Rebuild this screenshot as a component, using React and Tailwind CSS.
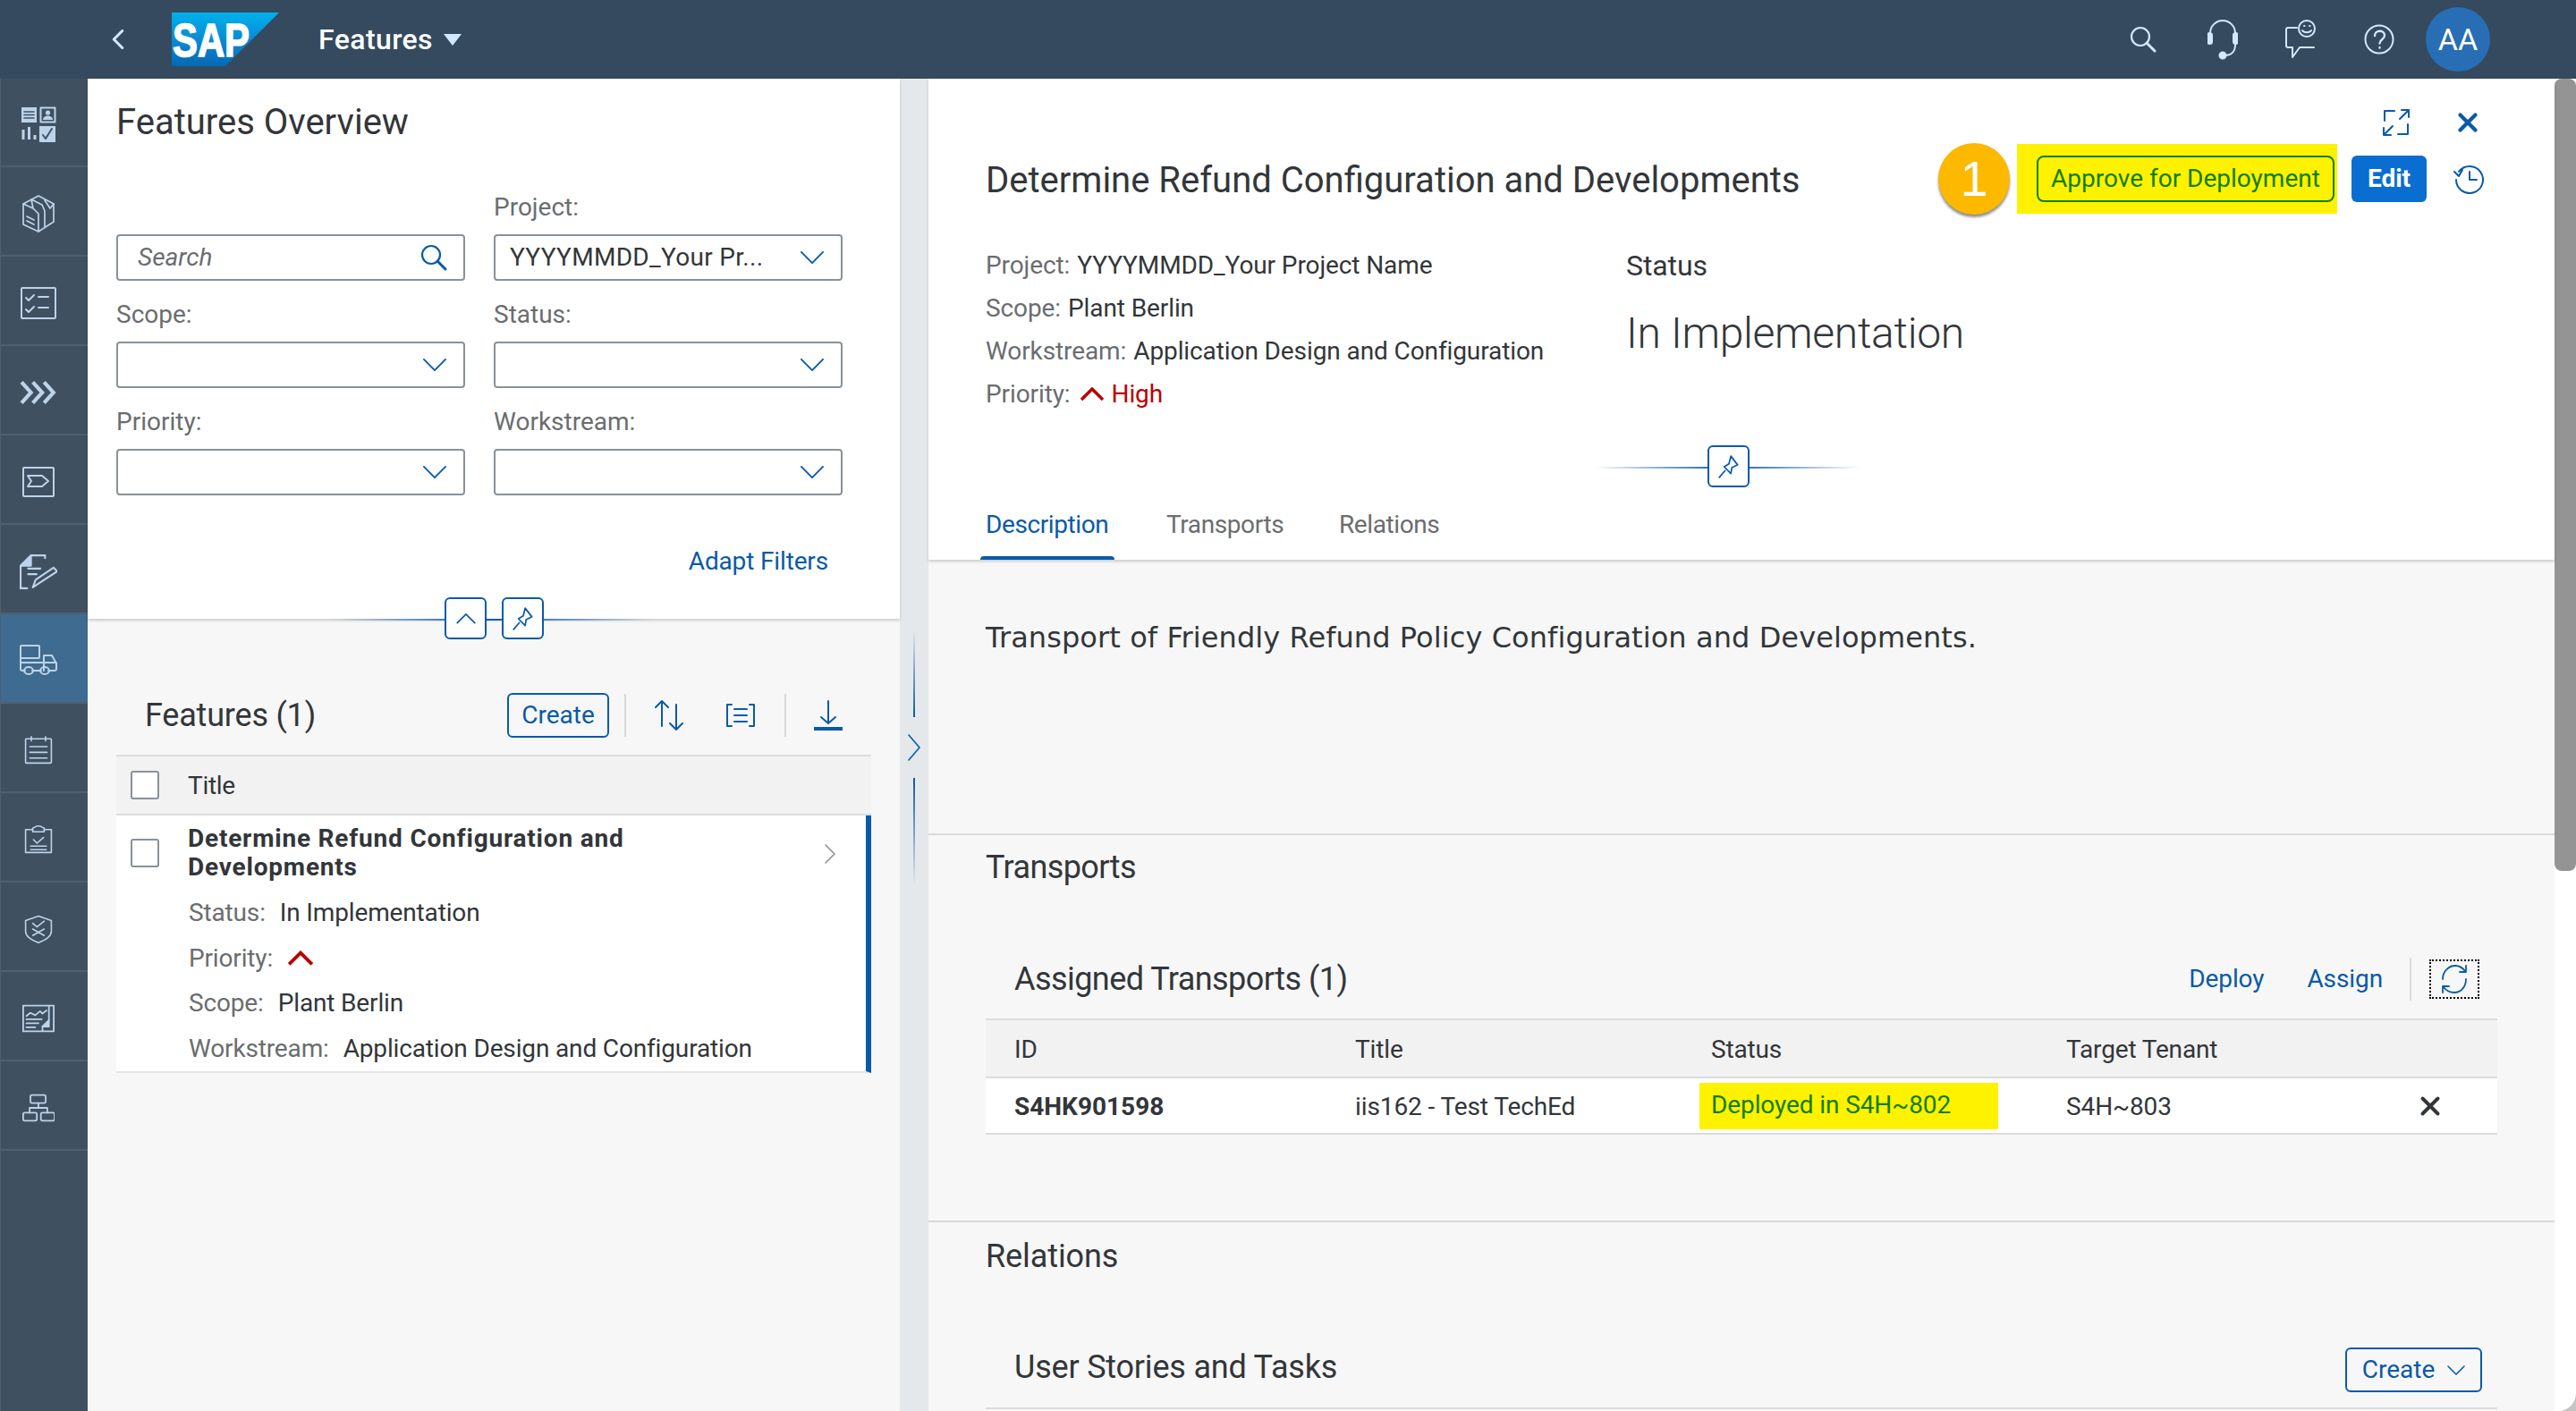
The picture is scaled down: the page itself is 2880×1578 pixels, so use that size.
import { ChevronLeft, X } from 'lucide-react';

function Ico({ size = 40, h, vb = '0 0 40 40', sw = 2, color = 'currentColor', children, className = '' }) {
    return (
        <svg width={size} height={h || size} viewBox={vb} fill="none" stroke={color} strokeWidth={sw} strokeLinecap="round" strokeLinejoin="round" className={className}>
            {children}
        </svg>
    );
}

function Down({ className = '' }) {
    return (
        <Ico size={26} h={14} vb="0 0 28 15" sw={2} color="#0a5aa8" className={className}>
            <path d="M1 1l13 13L27 1" />
        </Ico>
    );
}

function Up({ w = 28, h = 16, sw = 3.500, color = '#bb0000', className = '' }) {
    return (
        <Ico size={w} h={h} vb="0 0 28 16" sw={sw} color={color} className={className}>
            <path d="M2 14L14 2l12 12" strokeLinecap="butt" strokeLinejoin="miter" />
        </Ico>
    );
}

const sideIcons = [
    <Ico key="a" size={40}>
        <path d="M1 1h17v17H1z" fill="currentColor" stroke="none" />
        <path d="M4 6h11M4 9.5h11M4 13h11" stroke="#3f5161" strokeWidth="1.6" />
        <rect x="22.5" y="1.5" width="16" height="16" />
        <circle cx="30.5" cy="7" r="2.6" fill="currentColor" stroke="none" />
        <path d="M25 15c0-6 11-6 11 0z" fill="currentColor" stroke="none" />
        <path d="M3 37V26M9.5 37V23M16 37v-5" strokeWidth="3" strokeLinecap="butt" />
        <path d="M21 22h18v19H21z" fill="currentColor" stroke="none" />
        <path d="M25 32l3 4 7-11" stroke="#3f5161" strokeWidth="2" />
    </Ico>,
    <Ico key="b" size={36} h={42} vb="14 9 36 42" sw={1.700}>
        <path d="M32 10l17 9v20l-17 11-17-8V19z" />
        <path d="M15 19l11 5 6 6v20M24 14l12 6 3 7v18M39 15l6 9 4-5M26 24l-2-10" />
        <path d="M19 33l8 4M19 38l8 4" />
    </Ico>,
    <Ico key="c" size={40} h={36} vb="0 0 40 36">
        <rect x="1" y="1" width="38" height="34" rx="1" />
        <path d="M6 12l3 3 6-6M6 25l3 3 6-6M20 11h11M20 23h11" />
    </Ico>,
    <Ico key="d" size={42} h={30} vb="0 0 40 28" sw={4}>
        <path d="M2 3l10 11L2 25M14 3l10 11-10 11M26 3l10 11-10 11" strokeLinecap="butt" strokeLinejoin="miter" />
    </Ico>,
    <Ico key="e" size={36} h={34} vb="0 0 36 34">
        <rect x="1" y="1" width="34" height="32" rx="1" />
        <path d="M6 10h16l7 6-7 6H6l4-6z" />
    </Ico>,
    <Ico key="f" size={42} h={42}>
        <path d="M1 38V14L12 3h15v3" />
        <path d="M1 14h11V3z" fill="currentColor" />
        <path d="M1 38h7M9 17h13M9 23h9" />
        <path d="M14 37l3-8L36 16l4 4-20 13z" />
    </Ico>,
    <Ico key="g" size={42} h={36} vb="0 0 42 36">
        <rect x="1" y="1" width="21" height="14" rx="1" />
        <path d="M1 15v12c0 1 1 2 2 2h3M14 29h10M32 29h7c1 0 2-1 2-2v-6l-5-9h-9v17M1 20h26M27 20h14" />
        <ellipse cx="10" cy="29" rx="5" ry="4" />
        <ellipse cx="28" cy="29" rx="5" ry="4" />
    </Ico>,
    <Ico key="h" size={32} h={40}>
        <rect x="2" y="4" width="36" height="34" rx="1" />
        <path d="M10 1v6M30 1v6M8 15h24M8 23h24M8 31h24" />
    </Ico>,
    <Ico key="i" size={32} h={40}>
        <path d="M12 6H2v32h36V6H28" />
        <path d="M12 9V4c3-1 4-3 8-3s5 2 8 3v5z" />
        <path d="M13 20l5 5 9-8M9 29h22M9 34h22" />
    </Ico>,
    <Ico key="j" size={32} h={40}>
        <path d="M20 2l18 6v15c0 8-10 13-18 16C12 36 2 31 2 23V8z" />
        <path d="M12 12l6 5 10-8M12 29l16-9M12 20l16 9" />
    </Ico>,
    <Ico key="k" size={36} h={34} vb="0 0 40 34">
        <path d="M33 1h6v32H1V1h32v18l-8 8v6" />
        <path d="M25 27h8v-8" fill="currentColor" />
        <path d="M5 14l5-4 6 3 6-5 3 3 5-4M5 18h19M5 23h15M5 28h11" />
    </Ico>,
    <Ico key="l" size={36} h={32} vb="0 0 40 34">
        <rect x="10" y="1" width="19" height="10" rx="2" />
        <rect x="1" y="23" width="17" height="10" rx="2" />
        <rect x="23" y="23" width="17" height="10" rx="2" />
        <path d="M20 11v6M9 23v-6h22v6" />
    </Ico>,
];

function Sidebar() {
    return (
        <div className="w-[98px] shrink-0 bg-[#3f5161] text-[#bcd3e9] border-l border-[#4c6173]">
            {sideIcons.map((icon, i) => (
                <div key={i} className={`${i === 0 ? 'h-[99px]' : 'h-[100px]'} flex items-center justify-center pr-[14px] pt-[5px] border-b-2 border-[#4c6173] ${i === 6 ? 'bg-[#3e6b8f]' : ''}`}>
                    {icon}
                </div>
            ))}
        </div>
    );
}

function SapLogo() {
    return (
        <svg width="120" height="60" viewBox="0 0 120 60">
            <defs>
                <linearGradient id="sapg" x1="0" y1="0" x2="0" y2="1">
                    <stop offset="0" stopColor="#00b1eb" />
                    <stop offset="0.55" stopColor="#0a87d2" />
                    <stop offset="1" stopColor="#0668b3" />
                </linearGradient>
            </defs>
            <path d="M0 0h120L60 60H0z" fill="url(#sapg)" />
            <text x="1" y="49" fontFamily="Liberation Sans" fontWeight="700" fontSize="52" fill="#fff" stroke="#fff" strokeWidth="1.6" textLength="86" lengthAdjust="spacingAndGlyphs">SAP</text>
        </svg>
    );
}

function TopBar() {
    return (
        <div className="h-[88px] shrink-0 bg-[#354a5f] flex items-center text-[#d1e8ff]">
            <ChevronLeft className="ml-[113px] w-[38px] h-[44px]" strokeWidth={2} />
            <div className="ml-[41px]"><SapLogo /></div>
            <span className="ml-[44px] text-[32px] font-medium tracking-[0.4px] text-white">Features</span>
            <span className="ml-[12px] w-0 h-0 border-l-[10px] border-r-[10px] border-t-[13px] border-l-transparent border-r-transparent border-t-[#d1e8ff]" />
            <div className="ml-auto flex items-center">
                <Ico size={30} vb="0 0 30 30" sw={2.200}>
                    <circle cx="12" cy="12" r="10" />
                    <path d="M19 19l9 9" strokeWidth="3" />
                </Ico>
                <Ico size={34} h={48} vb="0 0 34 48" sw={2} className="ml-[57px]">
                    <path d="M3 24V17a14 14 0 0 1 28 0v7M31 30c0 8-5 12-12 12" />
                    <rect x="0" y="17" width="5" height="12" rx="2.5" fill="currentColor" />
                    <rect x="29" y="17" width="5" height="12" rx="2.5" fill="currentColor" />
                    <circle cx="17" cy="42" r="3.5" fill="currentColor" />
                </Ico>
                <Ico size={34} h={44} vb="0 0 34 44" sw={2} className="ml-[53px]">
                    <path d="M13 9H3a2 2 0 0 0-2 2v18a2 2 0 0 0 2 2h5v11l8-11h16" />
                    <circle cx="24" cy="10" r="9" />
                    <path d="M19 12c2 3 8 3 10 0M21 7h.5M27 7h.5" />
                </Ico>
                <Ico size={34} h={34} vb="0 0 34 34" sw={2} className="ml-[54px]">
                    <circle cx="17" cy="17" r="15.500" />
                    <path d="M12 13c0-7 11-7 11-.5 0 5-5 4-5.500 9M17.500 26v.5" strokeWidth="2.400" />
                </Ico>
                <div className="ml-[35px] mr-[96px] w-[72px] h-[72px] rounded-full bg-[#286eb4] text-white text-[34px] flex items-center justify-center">AA</div>
            </div>
        </div>
    );
}

function FilterSelect({ value }) {
    return (
        <div className="h-[52px] bg-white border-2 border-[#89919a] rounded-[4px] flex items-center text-[28px] tracking-[0.3px] text-[#32363a]">
            <span className="pl-[16px] w-[320px] whitespace-nowrap">{value}</span>
            <Down className="ml-auto mr-[19px]" />
        </div>
    );
}

function FilterField({ label, value }) {
    return (
        <div className="w-[390px]">
            <div className="h-[40px] mb-[10px] text-[28px] leading-[40px] text-[#6a6d70]">{label}</div>
            <FilterSelect value={value} />
        </div>
    );
}

function PinBtn({ className = '' }) {
    return (
        <div className={`w-[47px] h-[47px] rounded-[6px] border-2 border-[#0a5aa8] bg-white flex items-center justify-center ${className}`}>
            <Ico size={28} vb="0 0 26 26" sw={1.600} color="#0a5aa8">
                <path d="M15 2l7 9-6 3-1 6-7-7 5-3zM9 17l-6 7" />
            </Ico>
        </div>
    );
}

function FilterHeader() {
    return (
        <div className="relative h-[604px] shrink-0 bg-white shadow-[0_2px_3px_rgba(0,0,0,0.18)] px-[32px] pt-[24px]">
            <h1 className="text-[40px] leading-[50px] text-[#32363a] font-normal">Features Overview</h1>
            <div className="mt-[50px] grid grid-cols-[390px_390px] gap-x-[32px] gap-y-[18px]">
                <div className="pt-[50px]">
                    <div className="h-[52px] bg-white border-2 border-[#89919a] rounded-[4px] flex items-center text-[28px] italic text-[#6a6d70]">
                        <span className="pl-[22px]">Search</span>
                        <Ico size={30} vb="0 0 30 30" sw={2.200} color="#0a5aa8" className="ml-auto mr-[18px]">
                            <circle cx="12" cy="12" r="10" />
                            <path d="M19 19l9 9" strokeWidth="3" />
                        </Ico>
                    </div>
                </div>
                <FilterField label="Project:" value="YYYYMMDD_Your Pr..." />
                <FilterField label="Scope:" value="" />
                <FilterField label="Status:" value="" />
                <FilterField label="Priority:" value="" />
                <FilterField label="Workstream:" value="" />
            </div>
            <div className="mt-[39px] pr-[16px] w-[812px] text-right text-[28px] tracking-[-0.15px] leading-[70px] text-[#0a5aa8]">Adapt Filters</div>
            {/* expand / pin buttons sit over the header edge */}
            <div className="absolute left-[272px] top-[604px] w-[360px] h-[2px] bg-gradient-to-r from-transparent via-[#0a5aa8] to-transparent" />
            <div className="absolute left-[399px] top-[580px] flex gap-[17px]">
                <div className="w-[47px] h-[47px] rounded-[6px] border-2 border-[#0a5aa8] bg-white flex items-center justify-center">
                    <Up w={24} h={14} sw={2} color="#0a5aa8" />
                </div>
                <PinBtn />
            </div>
        </div>
    );
}

function ListRow({ label, children }) {
    return (
        <div className="h-[50.500px] flex items-center text-[28px] tracking-[-0.15px] pl-[81px] text-[#32363a]">
            <span className="text-[#6a6d70] mr-[16px]">{label}</span>
            {children}
        </div>
    );
}

function Checkbox() {
    return <div className="w-[32px] h-[32px] bg-white border-2 border-[#89919a] rounded-[3px]" />;
}

function FeaturesList() {
    return (
        <div className="flex-1 bg-[#f7f7f7] px-[32px] pt-[74px]">
            <div className="h-[78px] pb-[11px] flex items-center pl-[32px] pr-[32px]">
                <h2 className="text-[36px] tracking-[-0.2px] text-[#32363a] font-normal">Features (1)</h2>
                <div className="ml-auto w-[114px] h-[50px] rounded-[6px] border-2 border-[#0a5aa8] flex items-center justify-center text-[28px] text-[#0a5aa8]">Create</div>
                <div className="ml-[17px] w-[2px] h-[48px] bg-[#d9d9d9]" />
                <Ico size={34} h={36} vb="0 0 34 36" sw={2} color="#0a5aa8" className="ml-[31px]">
                    <path d="M9 30V2M2 9l7-7 7 7M25 6v28M18 27l7 7 7-7" />
                </Ico>
                <Ico size={32} h={26} vb="0 0 32 26" sw={2} color="#0a5aa8" className="ml-[47px]">
                    <path d="M6 1H1v24h5M26 1h5v24h-5M9 6h14M9 13h14M9 20h14" />
                </Ico>
                <div className="ml-[33px] w-[2px] h-[48px] bg-[#d9d9d9]" />
                <div className="ml-[31px] w-[32px] flex flex-col items-center">
                    <Ico size={24} h={28} vb="0 0 24 28" sw={2} color="#0a5aa8">
                        <path d="M12 1v25M4 19l8 7 8-7" />
                    </Ico>
                    <div className="mt-[2px] w-[32px] h-[4px] bg-[#0a5aa8]" />
                </div>
            </div>
            <div className="h-[68px] border-y-2 border-[#dcdcdc] bg-[#f2f2f2] flex items-center pl-[16px] text-[28px] text-[#32363a]">
                <Checkbox />
                <span className="ml-[32px] pt-[2px] tracking-[-0.3px]">Title</span>
            </div>
            <div className="relative h-[288px] bg-white border-b-2 border-[#e5e5e5] border-r-[6px] border-r-[#0a5aa8]">
                <div className="flex items-start pl-[16px] pt-[10px]">
                    <div className="pt-[16px]"><Checkbox /></div>
                    <div className="ml-[32px] w-[590px] text-[28px] tracking-[0.8px] leading-[32px] font-bold text-[#32363a]">Determine Refund Configuration and Developments</div>
                    <Ico size={12} h={22} vb="0 0 12 22" sw={1.600} color="#89919a" className="ml-auto mr-[34px] mt-[22px]">
                        <path d="M1 1l10 10L1 21" />
                    </Ico>
                </div>
                <div className="mt-[10px]">
                    <ListRow label="Status:">In Implementation</ListRow>
                    <ListRow label="Priority:"><Up w={30} h={18} /></ListRow>
                    <ListRow label="Scope:">Plant Berlin</ListRow>
                    <ListRow label="Workstream:">Application Design and Configuration</ListRow>
                </div>
            </div>
        </div>
    );
}

function Splitter() {
    return (
        <div className="w-[32px] shrink-0 bg-[#e5e8ea] flex flex-col items-center pt-[616px]">
            <div className="w-[2px] h-[98px] bg-gradient-to-b from-transparent to-[#0a5aa8]" />
            <Ico size={14} h={30} vb="0 0 14 30" sw={1.600} color="#0a5aa8" className="my-[19px]">
                <path d="M1 1l12 14L1 29" />
            </Ico>
            <div className="w-[2px] h-[120px] bg-gradient-to-b from-[#0a5aa8] to-transparent" />
        </div>
    );
}

function Fact({ label, children }) {
    return (
        <div className="h-[48px] flex items-center text-[28px] tracking-[-0.1px] text-[#32363a]">
            <span className="text-[#6a6d70] mr-[8px]">{label}</span>
            {children}
        </div>
    );
}

function DetailHeader() {
    return (
        <div className="relative h-[538px] bg-white shadow-[0_2px_3px_rgba(0,0,0,0.18)] pl-[64px]">
            <div className="absolute right-[80px] top-[32px] flex items-center gap-[47px]">
                <Ico size={32} vb="0 0 32 32" sw={2} color="#0a5aa8">
                    <path d="M14 3H3v11M18 29h11V18M20 12L30 2M22 2h8v8M12 20L2 30M2 22v8h8" />
                </Ico>
                <X className="w-[34px] h-[34px] text-[#0a5aa8]" strokeWidth={3} />
            </div>
            <div className="pt-[64px] pr-[79px] flex items-center h-[160px]">
                <h1 className="pt-[3px] text-[40px] text-[#32363a] font-normal">Determine Refund Configuration and Developments</h1>
                <div className="ml-auto w-[80px] h-[80px] rounded-full bg-[#fdb800] shadow-[0_3px_3px_rgba(0,0,0,0.45)] text-white text-[56px] flex items-center justify-center font-['Liberation_Sans']">1</div>
                <div className="ml-[8px] w-[358px] h-[78px] bg-[#fff200] flex items-center justify-end pr-[3px]">
                    <div className="w-[333px] h-[52px] rounded-[8px] border-2 border-[#107e00] flex items-center justify-center text-[28px] text-[#107e00]">Approve for Deployment</div>
                </div>
                <div className="ml-[16px] w-[84px] h-[52px] rounded-[6px] bg-[#0a6ed1] text-white font-bold text-[28px] flex items-center justify-center">Edit</div>
                <Ico size={34} vb="0 0 34 34" sw={2} color="#0a5aa8" className="ml-[30px]">
                    <path d="M6 9a15 15 0 1 1-3 9M1 9l5 5 4-7M18 9v9h8" />
                </Ico>
            </div>
            <div className="mt-[25px] flex">
                <div className="w-[716px]">
                    <Fact label="Project:">YYYYMMDD_Your Project Name</Fact>
                    <Fact label="Scope:">Plant Berlin</Fact>
                    <Fact label="Workstream:">Application Design and Configuration</Fact>
                    <Fact label="Priority:">
                        <Up className="ml-[2px] mr-[8px]" />
                        <span className="text-[#bb0000]">High</span>
                    </Fact>
                </div>
                <div>
                    <div className="h-[48px] flex items-center text-[32px] tracking-[-0.1px] text-[#32363a]">Status</div>
                    <div className="mt-[20px] text-[48px] tracking-[-0.3px] leading-[64px] font-light text-[#32363a]">In Implementation</div>
                </div>
            </div>
            <div className="absolute left-[745px] top-[434px] w-[297px] h-[2px] bg-gradient-to-r from-transparent via-[#0a5aa8] to-transparent" />
            <PinBtn className="absolute left-[871px] top-[410px]" />
            <div className="absolute left-[64px] top-[473px] flex text-[28px] tracking-[-0.4px] leading-[52px] text-[#6a6d70]">
                <div className="relative text-[#0a5aa8] w-[202px]">Description<div className="absolute -left-[6px] w-[150px] top-[61px] h-[4px] rounded-t bg-[#0a5aa8]" /></div>
                <div className="w-[193px]">Transports</div>
                <div>Relations</div>
            </div>
        </div>
    );
}

function Th({ children }) {
    return <div className="text-[28px] tracking-[-0.15px] pt-[2px] text-[#32363a]">{children}</div>;
}

function DetailBody() {
    return (
        <div className="flex-1 bg-[#f7f7f7]">
            <section className="h-[308px] pl-[64px] pt-[65px] border-b-2 border-[#d9d9d9]">
                <p className="text-[32px] leading-[44px] tracking-[0.08px] font-['DejaVu_Sans'] text-[#32363a]">Transport of Friendly Refund Policy Configuration and Developments.</p>
            </section>
            <section className="h-[433px] px-[64px] pt-[16px] border-b-2 border-[#d9d9d9]">
                <h2 className="text-[36px] tracking-[-0.6px] leading-[40px] font-normal text-[#32363a]">Transports</h2>
                <div className="mt-[71px] h-[68px] flex items-center pl-[32px] pr-[20px]">
                    <h3 className="text-[36px] tracking-[-0.55px] font-normal text-[#32363a]">Assigned Transports (1)</h3>
                    <span className="ml-auto text-[28px] tracking-[-0.1px] text-[#0a5aa8]">Deploy</span>
                    <span className="ml-[48px] text-[28px] tracking-[-0.1px] text-[#0a5aa8]">Assign</span>
                    <div className="ml-[30px] w-[2px] h-[48px] bg-[#d9d9d9]" />
                    <div className="ml-[20px] w-[56px] h-[44px] border-2 border-dotted border-black flex items-center justify-center">
                        <Ico size={34} h={34} vb="0 0 34 34" sw={1.800} color="#0a5aa8">
                            <path d="M4 17C4 8 11 2 18 2c5 0 8 2 11 6M30 17c0 9-6 15-13 15-5 0-9-2-12-6M23 9h7V2M11 25H4v7" />
                        </Ico>
                    </div>
                </div>
                <div className="h-[67px] mt-[10px] border-y-2 border-[#dcdcdc] bg-[#f2f2f2] grid grid-cols-[381px_398px_397px_1fr] items-center pl-[32px]">
                    <Th>ID</Th><Th>Title</Th><Th>Status</Th><Th>Target Tenant</Th>
                </div>
                <div className="h-[63px] bg-white border-b-2 border-[#dcdcdc] grid grid-cols-[381px_398px_397px_1fr] items-center pl-[32px] text-[28px] tracking-[-0.1px] text-[#32363a]">
                    <div className="font-bold tracking-normal pt-[2px]">S4HK901598</div>
                    <div className="pt-[2px]">iis162 - Test TechEd</div>
                    <div className="-ml-[13px] mr-[76px] h-[52px] bg-[#fff200] pl-[13px] flex items-center pb-[2px] whitespace-nowrap text-[#107e00]">Deployed in S4H~802</div>
                    <div className="flex items-center">
                        <span className="pt-[2px]">S4H~803</span>
                        <X className="ml-auto mr-[58px] w-[34px] h-[34px] text-[#32363a]" strokeWidth={2.800} />
                    </div>
                </div>
            </section>
            <section className="pt-[18px] px-[64px]">
                <h2 className="text-[36px] tracking-[-0.1px] leading-[40px] font-normal text-[#32363a]">Relations</h2>
                <div className="mt-[65px] h-[86px] flex items-center pl-[32px] pr-[17px] border-b-2 border-[#dcdcdc]">
                    <h3 className="mb-[6px] text-[36px] tracking-[-0.2px] font-normal text-[#32363a]">User Stories and Tasks</h3>
                    <div className="ml-auto w-[153px] h-[50px] rounded-[6px] border-2 border-[#0a5aa8] flex items-center justify-center text-[28px] text-[#0a5aa8]">
                        Create
                        <Ico size={20} h={11} vb="0 0 20 11" sw={1.600} color="#0a5aa8" className="ml-[14px]">
                            <path d="M1 1l9 9 9-9" />
                        </Ico>
                    </div>
                </div>
            </section>
        </div>
    );
}

export default function App() {
    return (
        <div className="relative w-[2880px] h-[1578px] overflow-hidden flex flex-col bg-white font-['Roboto',sans-serif]">
            <TopBar />
            <div className="flex flex-1 min-h-0">
                <Sidebar />
                <div className="w-[908px] shrink-0 flex flex-col">
                    <FilterHeader />
                    <FeaturesList />
                </div>
                <Splitter />
                <div className="w-[1818px] shrink-0 flex flex-col">
                    <DetailHeader />
                    <DetailBody />
                </div>
                <div className="flex-1 bg-white">
                    <div className="h-[886px] bg-[#949494] rounded-[8px]" />
                </div>
            </div>
            {/* rounded window corner */}
            <div className="absolute right-0 bottom-0 w-[20px] h-[20px] bg-[#c4c4c4]">
                <div className="w-[20px] h-[20px] bg-white rounded-br-[20px]" />
            </div>
        </div>
    );
}
